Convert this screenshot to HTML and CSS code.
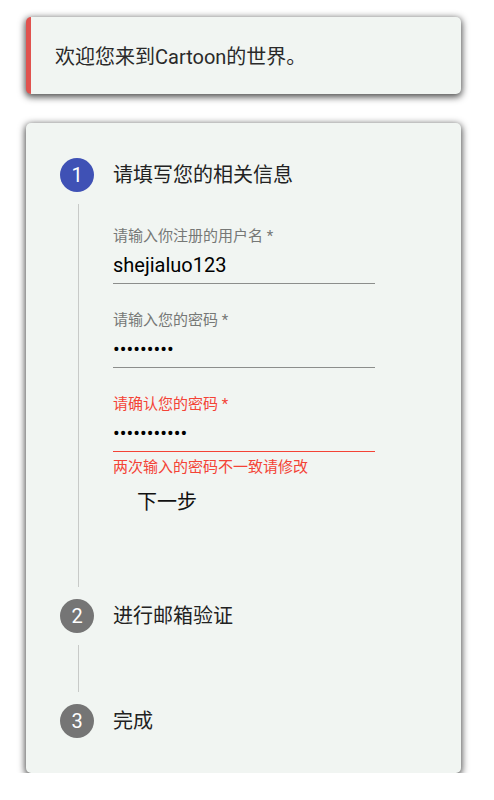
FILE: index.html
```html
<!DOCTYPE html>
<html lang="zh-CN">
<head>
<meta charset="utf-8">
<title>Cartoon</title>
<link rel="stylesheet" href="styles.css">
</head>
<body>
  <div class="notice">欢迎您来到Cartoon的世界。</div>

  <div class="stepper">
    <div class="step">
      <div class="step-head">
        <span class="circle active">1</span>
        <span class="step-title">请填写您的相关信息</span>
      </div>
      <div class="step-body first">
        <div class="field">
          <div class="label">请输入你注册的用户名 *</div>
          <div class="value">shejialuo123</div>
        </div>
        <div class="field">
          <div class="label">请输入您的密码 *</div>
          <div class="value dots">•••••••••</div>
        </div>
        <div class="field error">
          <div class="label">请确认您的密码 *</div>
          <div class="value dots">•••••••••••</div>
        </div>
        <div class="helper">两次输入的密码不一致请修改</div>
        <button class="next" type="button">下一步</button>
      </div>
    </div>

    <div class="step">
      <div class="step-head">
        <span class="circle">2</span>
        <span class="step-title">进行邮箱验证</span>
      </div>
      <div class="step-body short"></div>
    </div>

    <div class="step">
      <div class="step-head">
        <span class="circle">3</span>
        <span class="step-title">完成</span>
      </div>
    </div>
  </div>
</body>
</html>
```

FILE: styles.css
```css
html, body {
  margin: 0;
  padding: 0;
  background: #ffffff;
}

body {
  padding: 17px 33px 0 26px;
  font-family: Roboto, "Noto Sans CJK SC", sans-serif;
  color: #222222;
}

.notice {
  height: 77px;
  box-sizing: border-box;
  display: flex;
  align-items: center;
  padding-left: 24px;
  border-left: 5px solid #e0524e;
  border-radius: 5px;
  background: #f1f5f2;
  box-shadow: 0 2px 7px 1px rgba(0, 0, 0, 0.7);
  font-size: 20px;
  color: #2a2a2a;
}

.stepper {
  margin-top: 29px;
  padding: 35px 34px;
  border-radius: 5px;
  background: #f1f5f2;
  box-shadow: 0 2px 7px 1px rgba(0, 0, 0, 0.7);
}

.step-head {
  display: flex;
  align-items: center;
  gap: 19px;
  height: 34px;
}

.circle {
  width: 34px;
  height: 34px;
  border-radius: 50%;
  background: #757575;
  color: #ffffff;
  display: flex;
  align-items: center;
  justify-content: center;
  font-size: 20px;
  line-height: 1;
}

.circle.active {
  background: #3f51b5;
}

.step-title {
  font-size: 20px;
  line-height: 24px;
  color: #222222;
}

.step-body {
  margin: 12px 0 12px 18px;
  border-left: 1px solid #c8cac8;
  padding-left: 34px;
}

.step-body.first {
  padding-top: 22px;
  padding-bottom: 73px;
}

.step-body.short {
  height: 47px;
}

.field {
  width: 262px;
  border-bottom: 1px solid #8c8e8c;
  padding-bottom: 6px;
  margin-bottom: 26px;
}

.field.error {
  border-bottom-color: #f44336;
  margin-bottom: 0;
}

.label {
  font-size: 15px;
  line-height: 20px;
  color: #767876;
  margin-bottom: 7px;
}

.field.error .label {
  color: #f44336;
}

.value {
  font-size: 20px;
  line-height: 24px;
  color: #000000;
}

.helper {
  margin-top: 5px;
  font-size: 15px;
  line-height: 20px;
  color: #f44336;
}

.next {
  display: block;
  margin: 13px 0 0 0;
  padding: 0 0 0 24px;
  border: none;
  background: none;
  font-family: Roboto, "Noto Sans CJK SC", sans-serif;
  font-size: 20px;
  line-height: 24px;
  color: #111111;
}
```
